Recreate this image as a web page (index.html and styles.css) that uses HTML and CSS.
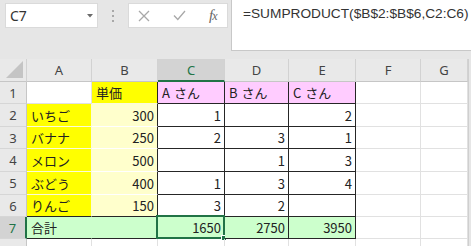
FILE: index.html
```html
<!DOCTYPE html>
<html lang="ja">
<head>
<meta charset="utf-8">
<title>Sheet</title>
<link rel="stylesheet" href="styles.css">
</head>
<body>
<div class="toolbar">
  <div class="namebox">
    <span class="nb-text">C7</span>
    <svg class="nb-arrow" width="6" height="4" viewBox="0 0 6 4"><polygon points="0,0 6,0 3,3.5" fill="#6b6b6b"/></svg>
  </div>
  <div class="grip"><i></i><i></i><i></i></div>
  <div class="fxbox">
    <svg class="btn" width="12" height="12" viewBox="0 0 12 12"><path d="M1 1 L11 11 M11 1 L1 11" stroke="#a8a8a8" stroke-width="1.3" fill="none"/></svg>
    <svg class="btn" width="13" height="11" viewBox="0 0 13 11"><path d="M1 5.5 L4.8 9.5 L12 1" stroke="#a8a8a8" stroke-width="1.3" fill="none"/></svg>
    <span class="fx"><span class="f">f</span><span class="x">x</span></span>
  </div>
  <div class="formula">=SUMPRODUCT($B$2:$B$6,C2:C6)</div>
</div>
<div class="sheetwrap">
  <div class="sheet">
    <div class="hdr corner"><svg width="17" height="17" viewBox="0 0 17 17"><polygon points="0,17 17,17 17,0" fill="#c4c4c4"/></svg></div>
    <div class="hdr">A</div>
    <div class="hdr">B</div>
    <div class="hdr sel">C</div>
    <div class="hdr">D</div>
    <div class="hdr">E</div>
    <div class="hdr">F</div>
    <div class="hdr">G</div>

    <div class="rh">1</div>
    <div class="cell"></div>
    <div class="cell y tl">単価</div>
    <div class="cell pk tb"><span class="lat">A</span>さん</div>
    <div class="cell pk tb"><span class="lat">B</span>さん</div>
    <div class="cell pk tb"><span class="lat">C</span>さん</div>
    <div class="cell"></div>
    <div class="cell"></div>

    <div class="rh">2</div>
    <div class="cell y">いちご</div>
    <div class="cell ly tl num">300</div>
    <div class="cell tb num">1</div>
    <div class="cell tb num"></div>
    <div class="cell tb num">2</div>
    <div class="cell"></div>
    <div class="cell"></div>

    <div class="rh">3</div>
    <div class="cell y">バナナ</div>
    <div class="cell ly tl num">250</div>
    <div class="cell tb num">2</div>
    <div class="cell tb num">3</div>
    <div class="cell tb num">1</div>
    <div class="cell"></div>
    <div class="cell"></div>

    <div class="rh">4</div>
    <div class="cell y">メロン</div>
    <div class="cell ly tl num">500</div>
    <div class="cell tb num"></div>
    <div class="cell tb num">1</div>
    <div class="cell tb num">3</div>
    <div class="cell"></div>
    <div class="cell"></div>

    <div class="rh">5</div>
    <div class="cell y">ぶどう</div>
    <div class="cell ly tl num">400</div>
    <div class="cell tb num">1</div>
    <div class="cell tb num">3</div>
    <div class="cell tb num">4</div>
    <div class="cell"></div>
    <div class="cell"></div>

    <div class="rh">6</div>
    <div class="cell y bb">りんご</div>
    <div class="cell ly tl bb num">150</div>
    <div class="cell tb num">3</div>
    <div class="cell tb num">2</div>
    <div class="cell tb num"></div>
    <div class="cell"></div>
    <div class="cell"></div>

    <div class="rh rsel">7</div>
    <div class="cell g bb nr">合計</div>
    <div class="cell g tl bb"></div>
    <div class="cell g tb num active">1650<span class="selbox"><span class="handle"></span></span></div>
    <div class="cell g tb num">2750</div>
    <div class="cell g tb num">3950</div>
    <div class="cell"></div>
    <div class="cell"></div>

    <div class="rh last">8</div>
    <div class="cell"></div>
    <div class="cell"></div>
    <div class="cell"></div>
    <div class="cell"></div>
    <div class="cell"></div>
    <div class="cell"></div>
    <div class="cell"></div>
  </div>
  <div class="vscroll"></div>
</div>
</body>
</html>
```

FILE: styles.css
```css
* { box-sizing: border-box; }
html, body { margin: 0; padding: 0; }
body {
  width: 471px;
  height: 246px;
  overflow: hidden;
  background: #ffffff;
  font-family: "Noto Sans", "Noto Sans CJK JP", sans-serif;
}

.toolbar {
  height: 59px;
  background: #e6e6e6;
  display: flex;
  align-items: flex-start;
}
.namebox {
  margin: 3px 0 0 5px;
  width: 93px;
  height: 25px;
  background: #ffffff;
  border: 1px solid #dadada;
  display: flex;
  align-items: center;
  justify-content: space-between;
  padding: 0 4px 0 4px;
}
.nb-text {
  font-family: "Noto Sans", sans-serif;
  font-size: 14px;
  color: #333;
}
.nb-arrow { margin-top: 1px; }
.grip {
  width: 30px;
  height: 25px;
  margin-top: 3px;
  display: flex;
  flex-direction: column;
  align-items: center;
  justify-content: center;
  gap: 3px;
}
.grip i {
  display: block;
  width: 2px;
  height: 2px;
  background: #a8a8a8;
}
.fxbox {
  margin-top: 3px;
  width: 100px;
  height: 25px;
  background: #ffffff;
  border: 1px solid #dadada;
  display: flex;
  align-items: center;
  padding-left: 9px;
  gap: 23px;
}
.fx {
  font-family: "Liberation Serif", serif;
  font-style: italic;
  color: #666;
  font-size: 15px;
  letter-spacing: -1px;
}
.fx .x { font-size: 12px; }
.formula {
  margin-left: 3px;
  flex: 1;
  height: 51px;
  background: #ffffff;
  border-left: 1px solid #c8c8c8;
  border-bottom: 1px solid #c8c8c8;
  padding: 6px 0 0 11px;
  font-family: "Liberation Sans", sans-serif;
  font-size: 13.7px;
  color: #333;
  white-space: nowrap;
}

.sheetwrap { display: flex; }
.sheet {
  width: 468px;
  display: grid;
  grid-template-columns: 27px 65px 66px 67px 64px 67px 65px 47px;
  grid-template-rows: 23px 22px 23px 22px 23px 23px 22px 22px 22px;
}
.vscroll {
  flex: 1;
  background: #e6e6e6;
  border-left: 1px solid #cfcfcf;
}

.hdr {
  background: #e9e9e9;
  border-right: 1px solid #d2d2d2;
  border-bottom: 1px solid #c6c6c6;
  display: flex;
  align-items: center;
  justify-content: center;
  font-size: 13px;
  color: #444;
}
.corner { align-items: flex-end; justify-content: flex-end; padding: 0 3px 3px 0; }
.hdr.sel {
  background: #d3d3d3;
  color: #217346;
  border-bottom: 2px solid #217346;
}
.rh {
  background: #e9e9e9;
  border-right: 1px solid #c6c6c6;
  border-bottom: 1px solid #d6d6d6;
  display: flex;
  align-items: center;
  justify-content: center;
  font-size: 13px;
  color: #444;
}
.rh.last { align-items: flex-start; padding-top: 5px; }
.rh.rsel {
  background: #d3d3d3;
  color: #217346;
  border-right: 2px solid #217346;
}

.cell {
  border-right: 1px solid #e1e1e1;
  border-bottom: 1px solid #e1e1e1;
  display: flex;
  align-items: center;
  padding: 0 4px;
  font-family: "Noto Sans CJK JP", sans-serif;
  font-size: 13px;
  color: #222;
  white-space: nowrap;
  position: relative;
}
.lat { margin-right: 4px; }
.num { justify-content: flex-end; padding: 0 3px; }
.y { background: #ffff00; border-color: #fbfbd8; }
.ly { background: #ffffcc; border-color: #ffffff; }
.pk { background: #ffccff; }
.g { background: #ccffcc; }
.nr { border-right-color: #ccffcc; }
.tb { border-right-color: #262626; border-bottom-color: #262626; }
.tl { border-right-color: #262626; }
.bb { border-bottom-color: #262626; }

.selbox {
  position: absolute;
  left: -2px;
  top: -2px;
  right: -1px;
  bottom: -1px;
  border: 2px solid #217346;
}
.handle {
  position: absolute;
  right: -4px;
  bottom: -4px;
  width: 6px;
  height: 6px;
  background: #217346;
  border: 1px solid #ffffff;
}
```
